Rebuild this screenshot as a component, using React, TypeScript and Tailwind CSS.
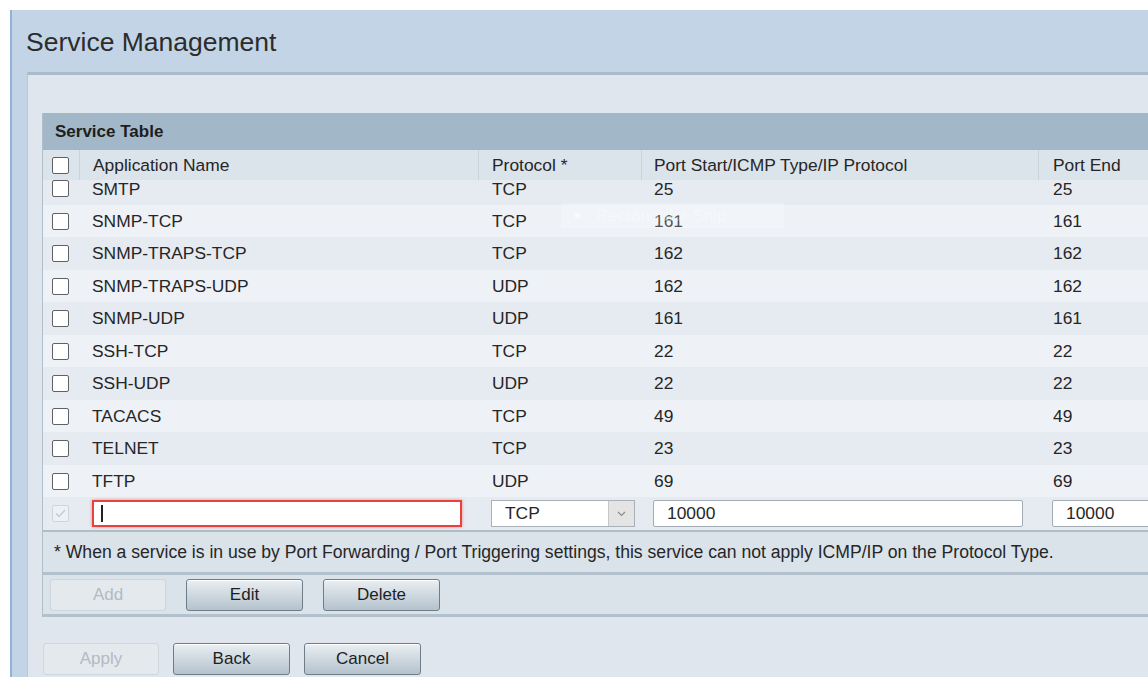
import React from "react";

type Service = { name: string; proto: string; start: string; end: string };

const services: Service[] = [
  { name: "SMTP", proto: "TCP", start: "25", end: "25" },
  { name: "SNMP-TCP", proto: "TCP", start: "161", end: "161" },
  { name: "SNMP-TRAPS-TCP", proto: "TCP", start: "162", end: "162" },
  { name: "SNMP-TRAPS-UDP", proto: "UDP", start: "162", end: "162" },
  { name: "SNMP-UDP", proto: "UDP", start: "161", end: "161" },
  { name: "SSH-TCP", proto: "TCP", start: "22", end: "22" },
  { name: "SSH-UDP", proto: "UDP", start: "22", end: "22" },
  { name: "TACACS", proto: "TCP", start: "49", end: "49" },
  { name: "TELNET", proto: "TCP", start: "23", end: "23" },
  { name: "TFTP", proto: "UDP", start: "69", end: "69" },
];

const rowHeights = ["h-[25px]", "h-[32px]", "h-[33px]", "h-[32px]", "h-[33px]", "h-[32px]", "h-[33px]", "h-[32px]", "h-[33px]", "h-[32px]"];

const cols = "grid grid-cols-[36px_399px_163px_397px_1fr]";

function Checkbox({ disabled }: { disabled?: boolean }) {
  if (disabled) {
    return (
      <div className="w-[17px] h-[17px] border border-[#cfd5db] bg-[#eef1f4] rounded-[2px] flex items-center justify-center">
        <svg width="11" height="9" viewBox="0 0 11 9">
          <path d="M1 4.5 L4 7.5 L10 1" fill="none" stroke="#c4cad0" strokeWidth="1.4" />
        </svg>
      </div>
    );
  }
  return <div className="w-[17px] h-[17px] border-[1.5px] border-[#5e6266] bg-white rounded-[2px]" />;
}

function Button({ label, disabled }: { label: string; disabled?: boolean }) {
  if (disabled) {
    return (
      <div className="w-[116px] h-[32px] flex items-center justify-center rounded-[3px] border border-[#cfd6dd] bg-[#e4e9ee] text-[#b3bac1] text-[17px]">
        {label}
      </div>
    );
  }
  return (
    <div className="w-[117px] h-[32px] flex items-center justify-center rounded-[3px] border border-[#6f7d88] bg-gradient-to-b from-[#eaeff3] to-[#b4c2cd] text-[#1e1e1e] text-[17px] shadow-[inset_0_1px_0_#ffffff]">
      {label}
    </div>
  );
}

export default function App() {
  return (
    <div className="w-[1148px] h-[677px] overflow-hidden bg-white pt-[10px] pl-[10px] font-['Liberation_Sans',Arial,sans-serif] text-[#262626]">
      <div className="h-full border-l-2 border-[#93b3d6] bg-[#c2d4e5] flex flex-col">
        <h1 className="h-[62px] pl-[14px] pt-[17px] text-[26.5px] leading-[30px] text-[#2c2c2c]">Service Management</h1>

        <div className="ml-[15px] flex-1 bg-[#dfe6ee] border-t-[3px] border-l border-t-[#aabccb] border-l-[#b8c8d6] pt-[38px] pl-[14px]">
          <div className="relative w-[1200px] border-l border-[#b1bfca] text-[17.4px]">
            <div className="h-[37px] bg-[#a2b8c8] flex items-center pl-[12px] font-bold text-[17px] text-[#1e1e1e]">Service Table</div>

            {/* column headings */}
            <div className={`${cols} h-[30px] bg-[#dbe3eb] items-center`}>
              <div className="pl-[9px]"><Checkbox /></div>
              <div className="pl-[13px] h-full flex items-center border-l border-[#c9d3dc]">Application Name</div>
              <div className="pl-[13px] h-full flex items-center border-l border-[#c9d3dc]">Protocol *</div>
              <div className="pl-[12px] h-full flex items-center border-l border-[#c9d3dc]">Port Start/ICMP Type/IP Protocol</div>
              <div className="pl-[14px] h-full flex items-center border-l border-[#c9d3dc]">Port End</div>
            </div>

            {services.map((s, i) => (
              <div
                key={s.name}
                className={`${cols} ${rowHeights[i]} ${i === 0 ? "items-start leading-[18px]" : "items-center"} ${i % 2 === 0 ? "bg-[#e5ebf1]" : "bg-[#eef2f7]"}`}
              >
                <div className="pl-[9px]"><Checkbox /></div>
                <div className="pl-[13px]">{s.name}</div>
                <div className="pl-[14px]">{s.proto}</div>
                <div className="pl-[13px]">{s.start}</div>
                <div className="pl-[15px]">{s.end}</div>
              </div>
            ))}

            {/* new entry row */}
            <div className={`${cols} h-[33px] items-center bg-[#e5ebf1]`}>
              <div className="pl-[9px]"><Checkbox disabled /></div>
              <div className="pl-[13px]">
                <div className="w-[370px] h-[27px] bg-white border-2 border-[#e8423c] shadow-[0_0_3px_#f08a86] flex items-center pl-[7px]">
                  <div className="w-[1.5px] h-[17px] bg-[#222]" />
                </div>
              </div>
              <div className="pl-[13px]">
                <div className="w-[144px] h-[27px] bg-white border border-[#a9b0b7] flex items-center">
                  <span className="flex-1 pl-[13px]">TCP</span>
                  <div className="w-[26px] h-full bg-[#e4e4e4] border-l border-[#c7c7c7] flex items-center justify-center">
                    <svg width="9" height="6" viewBox="0 0 9 6">
                      <path d="M1 1 L4.5 4.5 L8 1" fill="none" stroke="#8a8a8a" strokeWidth="1.1" />
                    </svg>
                  </div>
                </div>
              </div>
              <div className="pl-[12px]">
                <div className="w-[370px] h-[27px] bg-white border border-[#a3acb4] rounded-[2px] flex items-center pl-[13px]">10000</div>
              </div>
              <div className="pl-[14px]">
                <div className="w-[200px] h-[27px] bg-white border border-[#a3acb4] rounded-[2px] flex items-center pl-[13px]">10000</div>
              </div>
            </div>

            <div className="h-[42px] bg-[#dae2ea] border-t-2 border-[#aebdc9] flex items-center pl-[11px] text-[17.6px]">
              * When a service is in use by Port Forwarding / Port Triggering settings, this service can not apply ICMP/IP on the Protocol Type.
            </div>

            <div className="h-[45px] bg-[#dae2ea] border-t-[3px] border-b-[3px] border-[#b2c1cc] flex items-center gap-[20px] pl-[7px]">
              <Button label="Add" disabled />
              <Button label="Edit" />
              <Button label="Delete" />
            </div>

            {/* snipping-tool hint left over on screen */}
            <div className="absolute left-[518px] top-[90px] w-[223px] h-[25px] bg-white/20 flex items-center pl-[14px] gap-[16px] text-[17px] text-white/40">
              <div className="w-[5px] h-[5px] bg-white/50" />
              <span>Rectangular Snip</span>
            </div>
          </div>

          <div className="flex gap-[14px] mt-[26px] ml-[1px]">
            <Button label="Apply" disabled />
            <Button label="Back" />
            <Button label="Cancel" />
          </div>
        </div>
      </div>
    </div>
  );
}
